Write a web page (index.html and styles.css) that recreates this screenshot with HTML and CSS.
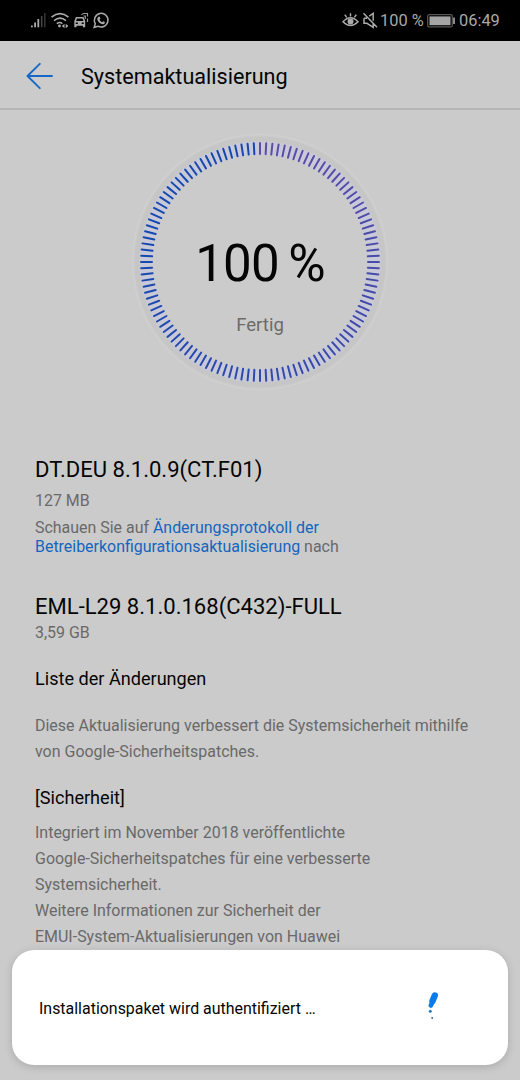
FILE: index.html
```html
<!DOCTYPE html>
<html lang="de">
<head>
<meta charset="utf-8">
<title>Systemaktualisierung</title>
<link rel="stylesheet" href="styles.css">
</head>
<body>
<div class="screen">
  <div class="status">
    <svg class="status-left" viewBox="0 0 80 18" width="80" height="18">
      <g fill="#aaa">
        <rect x="1" y="13.5" width="1.8" height="1.8"/>
        <rect x="4.2" y="10.5" width="1.8" height="4.8"/>
        <rect x="7.4" y="7" width="1.8" height="8.3"/>
        <rect x="10.9" y="4" width="1.6" height="11.3" fill="#444"/>
        <rect x="14" y="1" width="1.6" height="14.3" fill="#333"/>
      </g>
      <g fill="none" stroke="#aaa" stroke-width="1.6">
        <path d="M21.500 5.200q8.500-7 17 0M24 8.600q6-5 12 0M26.800 11.700q3.200-2.400 5.500 0"/>
      </g>
      <circle cx="29.500" cy="14" r="1.400" fill="#aaa"/>
      <path d="M34.500 11.800l-2.700 2.200 2.700 2.200zM35.700 11.800l2.700 2.200-2.700 2.200z" fill="#aaa"/>
      <path fill="#aaa" fill-rule="evenodd" d="M46 5h7.500l1.700 4v6.300h-2.200v-1.500h-6.500v1.500h-2.200V9zM47 6.500l-1 2.500h7.500l-1-2.500zM45.800 10.500v1.500h2v-1.500zM51.700 10.500v1.500h2v-1.500z"/>
      <path d="M51.500 3q1-1.500 2.500-1.500h3.500v3M57.500 6.500v3.500M53.500 4h1.800v3" fill="none" stroke="#999" stroke-width="1.200"/>
      <path d="M64.200 15.300l1.100-3.700a6.800 6.800 0 1 1 2.700 2.600z" fill="none" stroke="#aaa" stroke-width="1.500"/>
      <path d="M68.400 4.900c.6-.5 1.200-.3 1.500.4l.5 1.300-.8 1.200c.6 1.200 1.300 1.900 2.500 2.400l1-.9 1.700.8c.4 1.400-.8 2.200-2 2.100-3-.3-5.700-3.300-5.500-5.700 0-.6.500-1.200 1.100-1.600z" fill="#aaa"/>
    </svg>
    <div class="status-right">
      <svg viewBox="0 0 36 18" width="36" height="18">
        <g fill="none" stroke="#aaa" stroke-width="1.500">
          <path d="M1 9.800q7.500-8 15 0q-7.500 7.500-15 0z"/>
          <path d="M8.500 4.500V1.200M4.700 5.400L2.800 2.600M12.400 5.400l1.900-2.800"/>
        </g>
        <circle cx="8.500" cy="9.500" r="3" fill="#aaa"/>
        <g fill="none" stroke="#aaa" stroke-width="1.500">
          <path d="M21.500 1.200L35 15.200M22 6.300v5h3l6.200 4v-3.500M22 6.300h3M27.200 4.200l4-2.700v7.300"/>
        </g>
      </svg>
      <span class="percent">100&nbsp;%</span>
      <svg class="battery" viewBox="0 0 29 14" width="29" height="14">
        <rect x=".7" y=".7" width="24.600" height="12.200" rx="1.500" fill="none" stroke="#555" stroke-width="1.300"/>
        <rect x="2.500" y="2.400" width="21" height="8.800" fill="#a5a5a5"/>
        <path d="M27 3.500v6.500" stroke="#888" stroke-width="2"/>
      </svg>
      <span class="clock">06:49</span>
    </div>
  </div>

  <header class="bar">
    <svg class="back" viewBox="0 0 28 28" width="28" height="28"><path d="M26 14H1.500M13.800 1.800L1.500 14l12.300 12.200" fill="none" stroke="#1568c8" stroke-width="1.900" stroke-linecap="round" stroke-linejoin="round"/></svg>
    <h1 class="title">Systemaktualisierung</h1>
  </header>

  <section class="progress">
    <svg class="dial" viewBox="-130 -130 260 260" width="260" height="260">
      <circle r="127.500" fill="none" stroke="#cfcfcf" stroke-width="1.500"/>
      <circle r="123" fill="none" stroke="#c6c6c6" stroke-width="5"/>
      <circle r="114" fill="none" stroke="#c9cad8" stroke-width="13"/>
      <g id="ticks"></g>
    </svg>
    <div class="readout">
      <div class="value">100&#8201;%</div>
      <div class="state">Fertig</div>
    </div>
  </section>

  <main class="details">
    <h2 class="version">DT.DEU 8.1.0.9(CT.F01)</h2>
    <p class="size first">127 MB</p>
    <p class="hint">Schauen Sie auf <a>Änderungsprotokoll der</a><br><a>Betreiberkonfigurationsaktualisierung</a> nach</p>
    <h2 class="version second">EML-L29 8.1.0.168(C432)-FULL</h2>
    <p class="size total">3,59 GB</p>
    <h3 class="heading list">Liste der Änderungen</h3>
    <p class="text">Diese Aktualisierung verbessert die Systemsicherheit mithilfe<br>von Google-Sicherheitspatches.</p>
    <h3 class="heading security">[Sicherheit]</h3>
    <p class="text notes">Integriert im November 2018 veröffentlichte<br>Google-Sicherheitspatches für eine verbesserte<br>Systemsicherheit.<br>Weitere Informationen zur Sicherheit der<br>EMUI-System-Aktualisierungen von Huawei</p>
  </main>

  <div class="dialog">
    <span class="message">Installationspaket wird authentifiziert …</span>
    <svg class="spinner" viewBox="0 0 20 34" width="20" height="34">
      <path d="M9.800 5.500L7.500 11" stroke="#0b7bea" stroke-width="6.400" stroke-linecap="round"/>
      <path d="M8 11L5.800 15.500" stroke="#0b7bea" stroke-width="4.600" stroke-linecap="round"/>
      <circle cx="5.300" cy="21.300" r="1.500" fill="#267cc6"/>
      <circle cx="7.200" cy="28" r="1" fill="#376b98"/>
    </svg>
  </div>
</div>
<script src="dial.js"></script>
</body>
</html>
```
FILE: styles.css
```css
* { box-sizing: border-box; }
body, h1, h2, h3, p { margin: 0; font-weight: 400; }
body { font-family: Roboto, sans-serif; background: #cbcbcb; }
.screen { position: relative; width: 520px; height: 1080px; overflow: hidden; background: #cbcbcb; color: #050505; }
.status { height: 41px; background: #000; color: #a8a8a8; display: flex; align-items: center; justify-content: space-between; padding: 0 20px 0 30px; }
.status-right { display: flex; align-items: center; }
.percent, .clock { font-size: 16.4px; line-height: 20px; }
.percent { margin-left: 2px; width: 47px; white-space: nowrap; }
.clock { margin-left: 3px; width: 41px; white-space: nowrap; }
.bar { height: 69px; border-bottom: 2px solid #b6b6b6; display: flex; align-items: center; padding: 2px 26px 0; }
.title { font-size: 21.6px; line-height: 30px; margin: 2px 0 0 27px; white-space: nowrap; }
.progress { display: grid; justify-content: center; margin-top: 22px; height: 260px; }
.dial, .readout { grid-area: 1 / 1; }
.readout { text-align: center; padding-top: 103px; }
.value { font-size: 51px; line-height: 58px; letter-spacing: -0.9px; }
.state { font-size: 18.6px; line-height: 24px; margin-top: 20px; color: #6b6b6b; }
.details { padding: 63px 35px 0; white-space: nowrap; }
.version { font-size: 22.05px; line-height: 30px; }
.size, .hint { font-size: 15.95px; line-height: 19px; color: #696969; }
.first { margin-top: 6px; }
.hint { margin-top: 8px; }
.hint a { color: #1565c0; }
.second { margin-top: 36px; }
.total { margin-top: 1px; }
.heading { font-size: 18.1px; line-height: 24px; }
.list { margin-top: 25px; }
.text { font-size: 15.97px; line-height: 26px; margin-top: 22px; color: #696969; }
.security { margin-top: 21px; }
.notes { margin-top: 10px; }
.dialog { position: absolute; left: 12px; top: 950px; width: 496px; height: 115px; border-radius: 22px; background: #fff; box-shadow: 0 2px 8px rgba(0,0,0,.16); display: flex; align-items: center; justify-content: space-between; padding: 2px 63px 0 27px; }
.message { font-size: 15.95px; line-height: 20px; white-space: nowrap; }
.spinner { margin-bottom: 4px; }
```
FILE: dial.js
```js
// 120 tick marks, shading from violet at twelve o'clock round to blue.
const ns = 'http://www.w3.org/2000/svg';
const ticks = document.getElementById('ticks');
const from = [96, 76, 166];
const to = [22, 72, 174];
for (let i = 0; i < 120; i++) {
  const t = Math.min(1, i / 95);
  const line = document.createElementNS(ns, 'line');
  line.setAttribute('y1', -119);
  line.setAttribute('y2', -108);
  line.setAttribute('stroke', 'rgb(' + from.map((c, k) => Math.round(c + (to[k] - c) * t)) + ')');
  line.setAttribute('stroke-width', 2);
  line.setAttribute('stroke-linecap', 'round');
  line.setAttribute('transform', 'rotate(' + i * 3 + ')');
  ticks.appendChild(line);
}
```
